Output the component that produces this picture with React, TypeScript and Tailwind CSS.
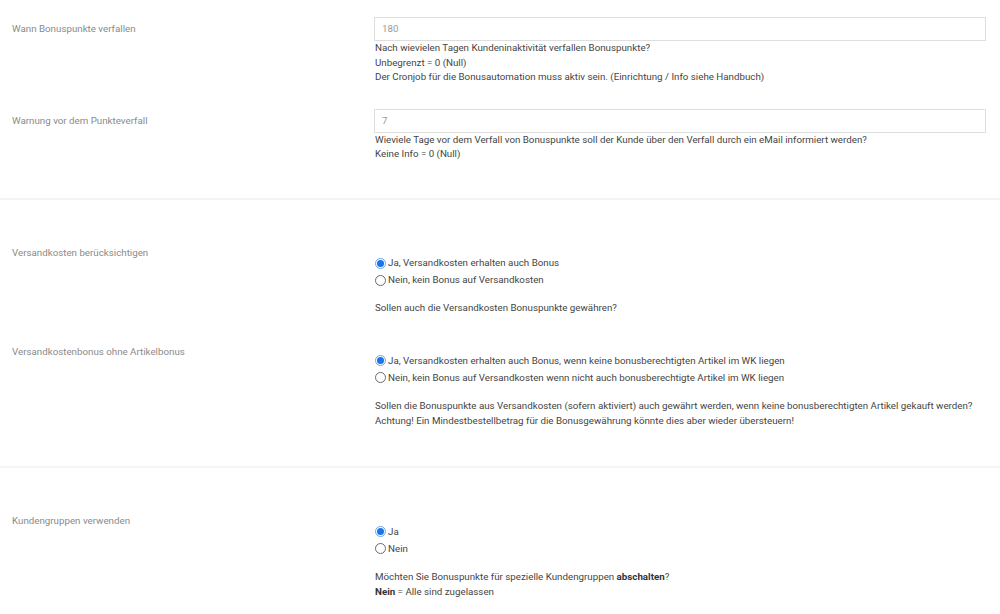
import type { ReactNode } from "react";

type Option = { label: string; checked?: boolean };

function Radio({ checked }: { checked?: boolean }) {
  if (checked) {
    return (
      <span className="flex h-[11px] w-[11px] shrink-0 items-center justify-center rounded-full border border-[#6aa6ea] bg-white">
        <span className="h-[7px] w-[7px] rounded-full bg-[#1a73e8]" />
      </span>
    );
  }
  return <span className="h-[11px] w-[11px] shrink-0 rounded-full border border-[#6b6b6b] bg-white" />;
}

function Label({ children, top }: { children: ReactNode; top: string }) {
  return <div className={`w-[375px] shrink-0 pl-[12px] text-[#8a8a8a] ${top}`}>{children}</div>;
}

function InputRow({ label, value, help }: { label: string; value: string; help: ReactNode }) {
  return (
    <div className="flex">
      <Label top="pt-[5px]">{label}</Label>
      <div className="flex-1 pr-[14px]">
        <div className="-ml-[1px] flex h-[24px] items-center border border-[#dedede] px-[7px] text-[#9a9a9a]">{value}</div>
        <div className="leading-[14.5px] text-[#444]">{help}</div>
      </div>
    </div>
  );
}

function RadioRow({
  label,
  options,
  help,
  pad,
  gap,
}: {
  label: string;
  options: Option[];
  help: ReactNode;
  pad: string;
  gap: string;
}) {
  return (
    <div className="flex">
      <Label top="pt-0">{label}</Label>
      <div className={`flex-1 pr-[14px] ${pad}`}>
        {options.map((o) => (
          <div key={o.label} className="flex h-[17px] items-center gap-[2px] text-[#444]">
            <Radio checked={o.checked} />
            <span>{o.label}</span>
          </div>
        ))}
        <div className={`leading-[14.5px] text-[#444] ${gap}`}>{help}</div>
      </div>
    </div>
  );
}

export default function App() {
  return (
    <div className="h-[614px] w-[1000px] overflow-hidden bg-white font-['Roboto',sans-serif] text-[9.75px] leading-[14px]">
      <section className="pt-[17px]">
        <InputRow
          label="Wann Bonuspunkte verfallen"
          value="180"
          help={
            <>
              <p>Nach wievielen Tagen Kundeninaktivität verfallen Bonuspunkte?</p>
              <p>Unbegrenzt = 0 (Null)</p>
              <p>Der Cronjob für die Bonusautomation muss aktiv sein. (Einrichtung / Info siehe Handbuch)</p>
            </>
          }
        />
        <div className="mt-[24px]">
          <InputRow
            label="Warnung vor dem Punkteverfall"
            value="7"
            help={
              <>
                <p>Wieviele Tage vor dem Verfall von Bonuspunkte soll der Kunde über den Verfall durch ein eMail informiert werden?</p>
                <p>Keine Info = 0 (Null)</p>
              </>
            }
          />
        </div>
      </section>

      <div className="mt-[36px] h-[2px] bg-[#f4f4f4]" />

      <section className="pt-[46px]">
        <RadioRow
          label="Versandkosten berücksichtigen"
          pad="pt-[9px]"
          gap="mt-[12px]"
          options={[
            { label: "Ja, Versandkosten erhalten auch Bonus", checked: true },
            { label: "Nein, kein Bonus auf Versandkosten" },
          ]}
          help={<p>Sollen auch die Versandkosten Bonuspunkte gewähren?</p>}
        />
        <div className="mt-[30px]">
          <RadioRow
            label="Versandkostenbonus ohne Artikelbonus"
            pad="pt-[7px]"
            gap="mt-[13px]"
            options={[
              { label: "Ja, Versandkosten erhalten auch Bonus, wenn keine bonusberechtigten Artikel im WK liegen", checked: true },
              { label: "Nein, kein Bonus auf Versandkosten wenn nicht auch bonusberechtigte Artikel im WK liegen" },
            ]}
            help={
              <>
                <p>
                  Sollen die Bonuspunkte aus Versandkosten (sofern aktiviert) auch gewährt werden, wenn keine
                  bonusberechtigten Artikel gekauft werden?
                </p>
                <p>Achtung! Ein Mindestbestellbetrag für die Bonusgewährung könnte dies aber wieder übersteuern!</p>
              </>
            }
          />
        </div>
      </section>

      <div className="mt-[38px] h-[2px] bg-[#f4f4f4]" />

      <section className="pt-[46px]">
        <RadioRow
          label="Kundengruppen verwenden"
          pad="pt-[9px]"
          gap="mt-[13px]"
          options={[{ label: "Ja", checked: true }, { label: "Nein" }]}
          help={
            <>
              <p>
                Möchten Sie Bonuspunkte für spezielle Kundengruppen <b className="font-bold text-[#333]">abschalten</b>?
              </p>
              <p>
                <b className="font-bold text-[#333]">Nein</b> = Alle sind zugelassen
              </p>
            </>
          }
        />
      </section>
    </div>
  );
}
